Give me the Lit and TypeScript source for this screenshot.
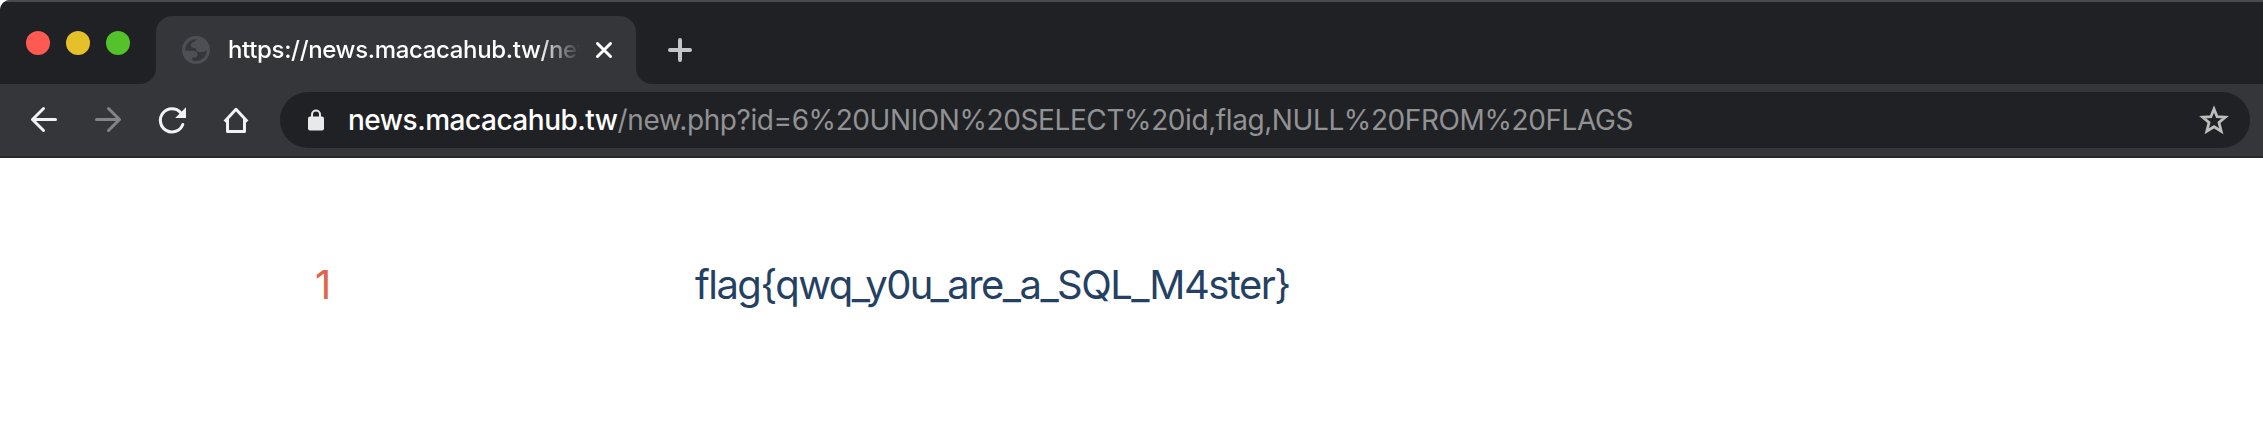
import { LitElement, html, css } from "lit";
import { customElement } from "lit/decorators.js";

@customElement("app-root")
export class AppRoot extends LitElement {
  static styles = css`
    :host { display: block; height: 437px; overflow: hidden; background: #fff; font-family: Inter, "Liberation Sans", sans-serif; }
    svg { display: block; flex: none; }
    .chrome { background: #35363a; border-top-left-radius: 10px; overflow: hidden; height: 156px; border-bottom: 2px solid #28292c; }
    .strip { display: flex; height: 82px; border-top: 2px solid #494b4e; }
    .lights { box-sizing: border-box; width: 156px; padding: 29px 0 0 26px; display: flex; gap: 16px; background: #202124; border-bottom-right-radius: 16px; }
    .dot { width: 24px; height: 24px; border-radius: 50%; }
    .red { background: #ff5a52; }
    .yellow { background: #e6c029; }
    .green { background: #53c22b; }
    .tabwrap { width: 480px; padding-top: 14px; background: linear-gradient(#202124 50%, #35363a 50%); }
    .tab { box-sizing: border-box; height: 68px; padding-left: 26px; display: flex; align-items: center; background: #35363a; border-radius: 16px 16px 0 0; }
    .title { margin-left: 18px; width: 352px; overflow: hidden; white-space: nowrap; color: #fff; font-size: 24px; line-height: 34px; font-weight: 500; letter-spacing: -0.34px;
      -webkit-mask-image: linear-gradient(90deg, #000 310px, transparent 352px); mask-image: linear-gradient(90deg, #000 310px, transparent 352px); }
    .close { margin-left: 16px; }
    .rest { flex: 1; padding: 36px 0 0 32px; background: #202124; border-bottom-left-radius: 16px; }
    .bar { display: flex; height: 72px; align-items: center; box-sizing: border-box; padding: 0 13px 0 28px; }
    .nav { display: flex; gap: 32px; }
    .omni { flex: 1; margin-left: 28px; height: 56px; border-radius: 28px; background: #202124; display: flex; align-items: center; padding: 0 21px 0 28px; }
    .url { flex: 1; margin-left: 24px; white-space: nowrap; font-size: 28px; line-height: 40px; letter-spacing: -0.41px; color: #919294; }
    .host { color: #fff; font-weight: 500; letter-spacing: -0.48px; }
    .page { display: flex; padding: 103px 0 0 315px; font-size: 40px; line-height: 48px; white-space: nowrap; }
    .id { width: 380px; color: #e0664a; }
    .flag { color: #244163; letter-spacing: -1.55px; }
  `;

  render() {
    return html`
      <header class="chrome">
        <div class="strip">
          <div class="lights"><i class="dot red"></i><i class="dot yellow"></i><i class="dot green"></i></div>
          <div class="tabwrap">
            <div class="tab">
              <svg width="28" height="28" viewBox="0 0 28 28">
                <circle cx="14" cy="14" r="14" fill="#4e4f54"/>
                <path fill="#35363a" d="M15.800 3.300C13.500 3.600 13.800 5.500 12 6c-2.500.500-3.500 2-3 4 .400 1.500 2 2 4.500 2 .300 2.700 1.800 4 4.500 4h2.500c1.800 0 2.800-1.200 4.300-2 .2 6-4.800 10.900-10.800 10.900-1.500 0-2.800-.2-3.800-.7v-2.700h2.800c1.500 0 2.500-1 2.500-2.500 0-2.700-1.500-4.300-4.500-4.300H3.200C3 7.500 8.500 2.500 15.800 3.300z"/>
              </svg>
              <div class="title">https://news.macacahub.tw/new</div>
              <svg class="close" width="16" height="16" viewBox="0 0 16 16"><path d="M1.500 1.500 14.500 14.500M14.500 1.500 1.500 14.500" stroke="#fff" stroke-width="3" stroke-linecap="round"/></svg>
            </div>
          </div>
          <div class="rest">
            <svg width="24" height="24" viewBox="0 0 24 24"><path d="M12 2v20M2 12h20" stroke="#c4c6ca" stroke-width="4" stroke-linecap="round"/></svg>
          </div>
        </div>
        <div class="bar">
          <nav class="nav">
            <svg width="32" height="32" viewBox="0 0 32 32"><path d="M27.500 15.500H4.500M15.500 4.500l-11 11 11 11" fill="none" stroke="#f1f2f4" stroke-width="3" stroke-linecap="round" stroke-linejoin="round"/></svg>
            <svg width="32" height="32" viewBox="0 0 32 32"><path d="M4.500 15.500h23M16.500 4.500l11 11-11 11" fill="none" stroke="#838487" stroke-width="3" stroke-linecap="round" stroke-linejoin="round"/></svg>
            <svg width="32" height="32" viewBox="0 0 32 32"><path d="M26.800 20.500A11.600 11.600 0 1 1 24.700 8.700" fill="none" stroke="#f1f2f4" stroke-width="3" stroke-linecap="round"/><path d="M30 3.200V14H19.200z" fill="#f1f2f4"/></svg>
            <svg width="32" height="32" viewBox="0 0 32 32"><path d="M4.700 17.500 16 5.300l11.300 12.200M7.500 15v12.500h17V15" fill="none" stroke="#f1f2f4" stroke-width="3" stroke-linejoin="round"/></svg>
          </nav>
          <div class="omni">
            <svg width="16" height="22" viewBox="0 0 16 22"><path d="M4 9V5.500a4 4 0 0 1 8 0V9" fill="none" stroke="#e8e9eb" stroke-width="2"/><rect y="7.500" width="16" height="14" rx="2" fill="#e8e9eb"/></svg>
            <div class="url"><span class="host">news.macacahub.tw</span>/new.php?id=6%20UNION%20SELECT%20id,flag,NULL%20FROM%20FLAGS</div>
            <svg width="30" height="30" viewBox="0 0 30 30"><path d="M15 4 18.100 11.700 26.300 12.200 20 17.500 22.200 26.200 15 21.700 7.800 26.200 10 17.500 3.700 12.200 11.900 11.700z" fill="none" stroke="#bdbdbd" stroke-width="2.800"/></svg>
          </div>
        </div>
      </header>
      <main class="page">
        <div class="id">1</div>
        <div class="flag">flag{qwq_y0u_are_a_SQL_M4ster}</div>
      </main>
    `;
  }
}
